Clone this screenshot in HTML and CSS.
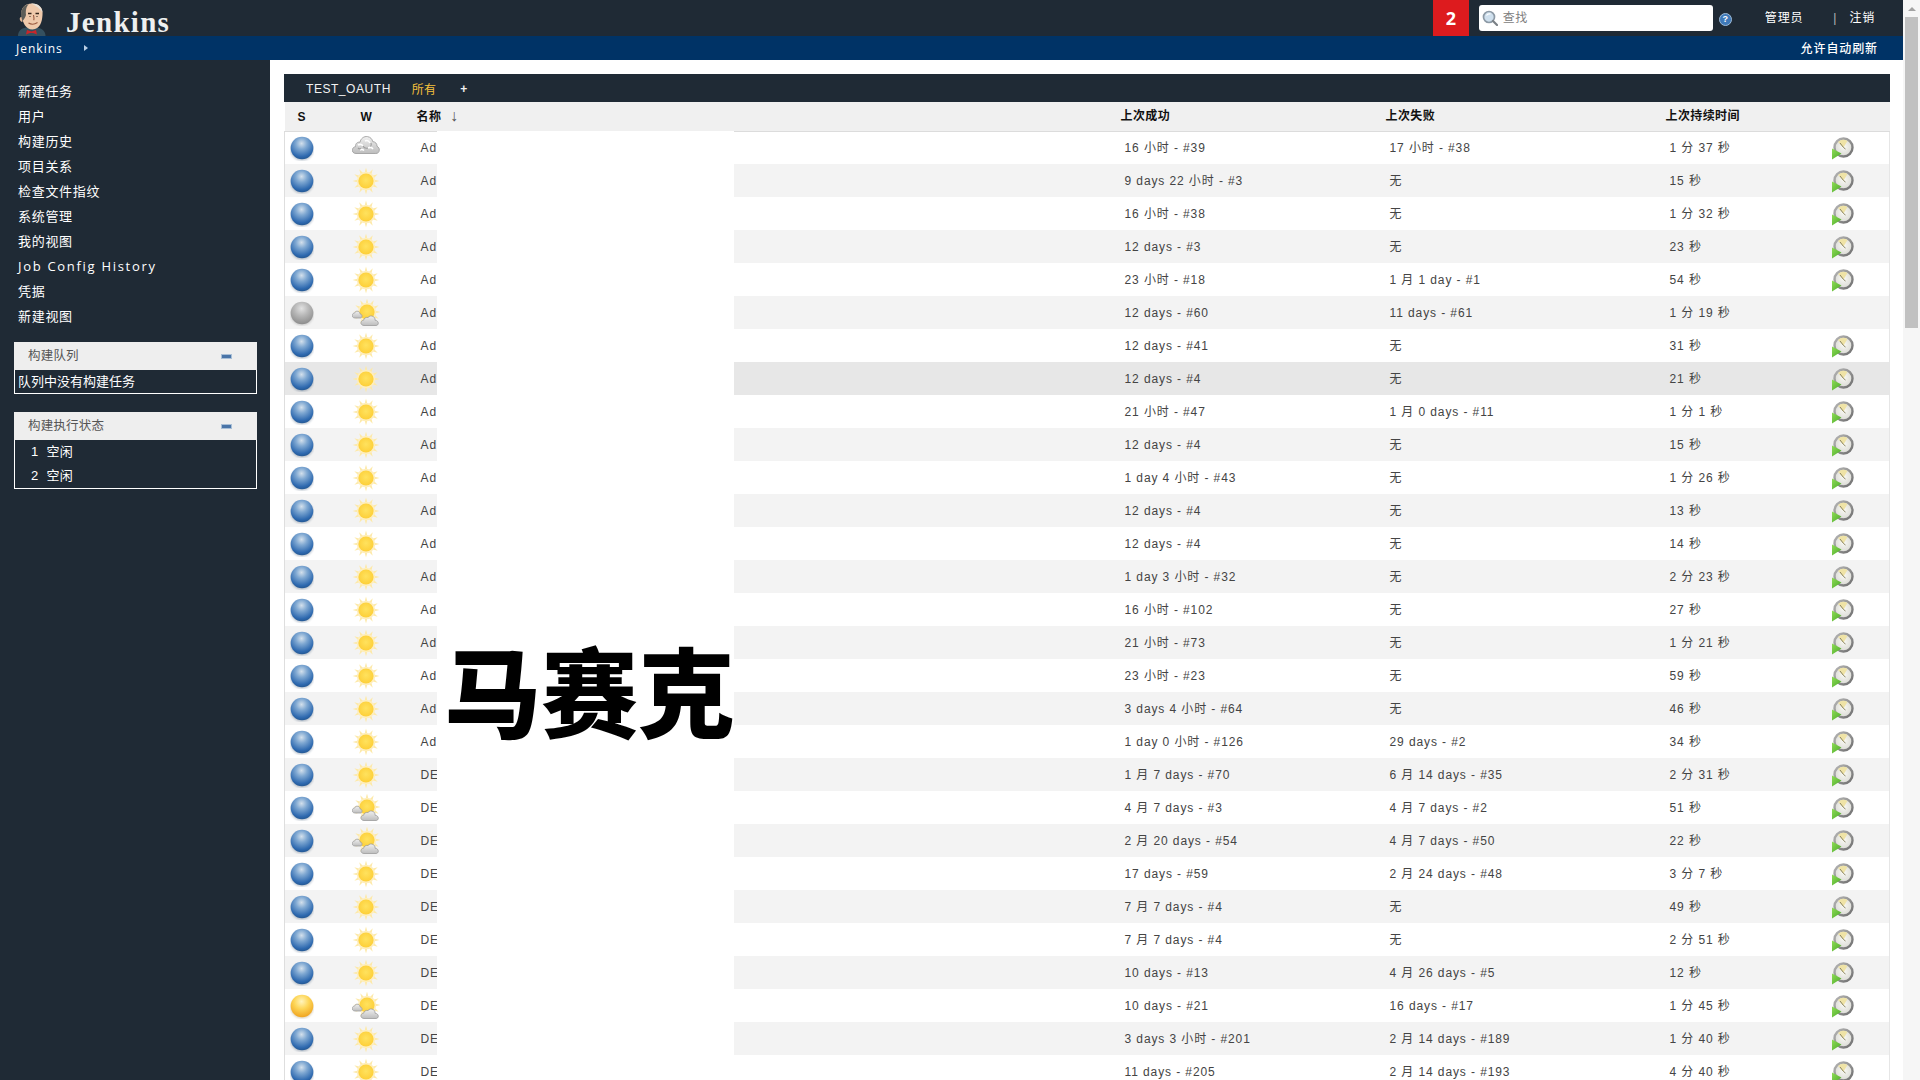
FILE: index.html
```html
<!DOCTYPE html>
<html lang="zh">
<head>
<meta charset="utf-8">
<title>Jenkins</title>
<link rel="stylesheet" href="styles.css">
</head>
<body>
<svg class="defs" aria-hidden="true">
  <defs>
    <radialGradient id="gBlue" cx="48%" cy="30%" r="72%"><stop offset="0" stop-color="#d3e0ec"/><stop offset=".35" stop-color="#7fa8d2"/><stop offset=".8" stop-color="#2f6ab0"/><stop offset="1" stop-color="#22558f"/></radialGradient>
    <radialGradient id="gGray" cx="48%" cy="30%" r="72%"><stop offset="0" stop-color="#e2e2e2"/><stop offset=".45" stop-color="#b7b7b7"/><stop offset="1" stop-color="#8a8a8a"/></radialGradient>
    <radialGradient id="gYellow" cx="48%" cy="30%" r="72%"><stop offset="0" stop-color="#fff4bd"/><stop offset=".45" stop-color="#fdd658"/><stop offset="1" stop-color="#efa11c"/></radialGradient>
    <radialGradient id="gSun" cx="50%" cy="45%" r="55%"><stop offset="0" stop-color="#ffe25e"/><stop offset="1" stop-color="#fdcf38"/></radialGradient>
    <linearGradient id="gCloud" x1="0" y1="0" x2="0" y2="1"><stop offset="0" stop-color="#f0f0f0"/><stop offset="1" stop-color="#bdbdbd"/></linearGradient>
    <linearGradient id="gGreen" x1="0" y1="0" x2="1" y2="1"><stop offset="0" stop-color="#8fdc55"/><stop offset="1" stop-color="#4aa92a"/></linearGradient>
    <linearGradient id="gRing" x1="0" y1="0" x2="1" y2="1"><stop offset="0" stop-color="#b5b5b5"/><stop offset="1" stop-color="#6f6f6f"/></linearGradient>
    <radialGradient id="gFace" cx="50%" cy="45%" r="55%"><stop offset="0" stop-color="#fafaf4"/><stop offset="1" stop-color="#d9d9d4"/></radialGradient>
    <filter id="soft" x="-20%" y="-20%" width="140%" height="140%"><feGaussianBlur stdDeviation=".45"/></filter>
    <filter id="shade" x="-20%" y="-20%" width="140%" height="140%"><feGaussianBlur stdDeviation=".8"/></filter>
    <g id="rays" fill="#fde9a8">
      <path id="ray" d="M14 .5L16 8H12z"/>
      <use href="#ray" transform="rotate(30 14 14)"/><use href="#ray" transform="rotate(60 14 14)"/><use href="#ray" transform="rotate(90 14 14)"/>
      <use href="#ray" transform="rotate(120 14 14)"/><use href="#ray" transform="rotate(150 14 14)"/><use href="#ray" transform="rotate(180 14 14)"/>
      <use href="#ray" transform="rotate(210 14 14)"/><use href="#ray" transform="rotate(240 14 14)"/><use href="#ray" transform="rotate(270 14 14)"/>
      <use href="#ray" transform="rotate(300 14 14)"/><use href="#ray" transform="rotate(330 14 14)"/>
    </g>
    <symbol id="ball-blue" viewBox="0 0 24 25"><ellipse cx="12" cy="13.500" rx="11.500" ry="11" fill="#1c3a5a" opacity=".3" filter="url(#shade)"/><circle cx="12" cy="12" r="11.300" fill="url(#gBlue)"/></symbol>
    <symbol id="ball-gray" viewBox="0 0 24 25"><ellipse cx="12" cy="13.500" rx="11.500" ry="11" fill="#333" opacity=".2" filter="url(#shade)"/><circle cx="12" cy="12" r="11.300" fill="url(#gGray)"/></symbol>
    <symbol id="ball-yellow" viewBox="0 0 24 25"><ellipse cx="12" cy="13.500" rx="11.500" ry="11" fill="#7a5a10" opacity=".25" filter="url(#shade)"/><circle cx="12" cy="12" r="11.300" fill="url(#gYellow)"/></symbol>
    <symbol id="sun" viewBox="0 0 28 28">
      <use href="#rays" filter="url(#soft)"/>
      <circle cx="14" cy="14" r="9.200" fill="#feeebd" filter="url(#soft)"/><circle cx="14" cy="14" r="7.600" fill="url(#gSun)"/>
    </symbol>
    <symbol id="cloud" viewBox="0 0 28 22">
      <path d="M4 19.500c-3 0-4-2.200-3.500-4.200.4-1.700 1.700-2.500 3-2.600C3.300 9.500 5.500 7.700 8 8.300 8.700 4.500 12 2 15.500 2.600c3 .5 4.800 2.500 5.200 5 2.600.1 4.500 2.200 4.300 4.700 1.600.8 2.500 2.300 2.300 4-.2 2-1.500 3.200-3.500 3.200z" fill="url(#gCloud)" stroke="#a0a0a0" stroke-width=".9"/>
      <path d="M6 11c2-1 4-.5 5 1M13 7c2-1 4 0 5 2M16 14c2-1 4-.5 5 1M8 16c2-1 3-.5 4 .5" fill="none" stroke="#fff" stroke-width="1.500"/>
      <path d="M11 12c1 2 3 2.500 5 2M19 9c.5 1.500.3 2.600-.5 3.500M6 14c1 1 2 1 3 .5" fill="none" stroke="#9d9d9d" stroke-width="1.100"/>
    </symbol>
    <symbol id="partly" viewBox="0 0 28 28">
      <g transform="translate(1 -1)"><use href="#rays" filter="url(#soft)"/><circle cx="14" cy="14" r="9.200" fill="#feeebd" filter="url(#soft)"/><circle cx="14" cy="14" r="7.600" fill="url(#gSun)"/></g>
      <path d="M3 19c-2 0-3-1.400-2.800-2.900.2-1.300 1.200-2 2.300-2 .5-1.500 2-2.300 3.500-1.800 1.300.4 2 1.500 2 2.600 1.500.2 2.200 1.300 2 2.500-.2 1-1 1.600-2 1.600z" fill="url(#gCloud)" stroke="#a0a0a0" stroke-width=".8"/>
      <path d="M12 26.500c-2 0-3.200-1.400-3-3 .2-1.300 1.300-2.200 2.500-2.200.5-2 2.300-3.300 4.500-2.800 1.200-1.600 3.500-2 5.200-1 1.500.9 2 2.300 1.800 3.700 1.900.1 3.300 1.400 3.300 3 0 1.300-1 2.300-2.300 2.300z" fill="url(#gCloud)" stroke="#9c9c9c" stroke-width=".8"/>
    </symbol>
    <symbol id="clock" viewBox="0 0 23 23">
      <circle cx="12.500" cy="10.500" r="9" fill="url(#gFace)" stroke="url(#gRing)" stroke-width="2.400"/>
      <path d="M7 5a7.500 7.500 0 0 1 9.500-1L12.500 10.500z" fill="#efe3a6"/>
      <path d="M9 6l3.500 4.500 2 1.500" fill="none" stroke="#8a8462" stroke-width="1"/>
      <path d="M1 11.500L10.500 16.500L1 22.500z" fill="url(#gGreen)"/>
    </symbol>
    <symbol id="logo" viewBox="0 0 30 33">
      <path d="M1 33c0-5 3-7.500 8-8.500h11c5 1 8.500 3.500 8.500 8.500z" fill="#35505f"/>
      <path d="M10 27l4.500 1.500L19 27l1 4.500-4-1.500h-3L9 31.500z" fill="#c9262a"/>
      <path d="M4.500 12C3.500 5 8 .5 15 .5s11.500 4.500 10.500 11.500c-.4 7-2.500 14-10 14.500C8.500 26.500 5.500 19 4.500 12z" fill="#efc9ab"/>
      <path d="M5.500 18C2 10 5 2 12 1 9 3.500 8.500 8 9 12c-.5 2.500-2.500 5-3.500 6z" fill="#5d5d58"/>
      <path d="M14 .5c5.500-.5 11 2.500 11.500 9C23 5.500 19 2.500 14 .5z" fill="#e6e0d7"/>
      <path d="M11 10.500h3.500M18.500 10.500h3.500M13 13v.8M20 13v.8" stroke="#33241b" stroke-width="1.300" fill="none"/>
      <path d="M16.500 12c.3 2.500 1 4 .2 5.300M11.500 20c3 1.800 6 1.600 9-.5" stroke="#9a5a40" stroke-width="1.100" fill="none"/>
      <path d="M4.500 14c-2.500-.5-2.500 4.500 1 5z" fill="#e2b697"/>
    </symbol>
    <symbol id="search" viewBox="0 0 16 16">
      <circle cx="7" cy="7" r="5.500" fill="#cfe0ee" stroke="#8d9aa6" stroke-width="1.700"/>
      <path d="M4.500 5.500a3.500 3.500 0 0 1 4-1.500" stroke="#fff" stroke-width="1.200" fill="none"/>
      <path d="M11 11l4 4" stroke="#7a8086" stroke-width="2.200" stroke-linecap="round"/>
    </symbol>
  </defs>
</svg>

<div class="app">
  <div class="page">
    <header class="topbar">
      <div class="brand">
        <svg class="logo"><use href="#logo"/></svg>
        <span class="wordmark">Jenkins</span>
      </div>
      <div class="top-right">
        <span class="badge">2</span>
        <div class="searchbox">
          <svg class="search-icon"><use href="#search"/></svg>
          <span class="search-text">查找</span>
        </div>
        <span class="help">?</span>
        <span class="user">管理员</span>
        <span class="sep">|</span>
        <span class="logout">注销</span>
      </div>
    </header>
    <nav class="crumbs">
      <span class="crumb">Jenkins</span>
      <span class="crumb-arrow"></span>
      <span class="refresh">允许自动刷新</span>
    </nav>
    <div class="main">
      <aside class="side">
        <ul class="tasks">
          <li>新建任务</li><li>用户</li><li>构建历史</li><li>项目关系</li><li>检查文件指纹</li><li>系统管理</li><li>我的视图</li><li class="latin">Job Config History</li><li>凭据</li><li>新建视图</li>
        </ul>
        <section class="panel">
          <div class="panel-head">构建队列<span class="minus"></span></div>
          <div class="panel-body queue">队列中没有构建任务</div>
        </section>
        <section class="panel">
          <div class="panel-head">构建执行状态<span class="minus"></span></div>
          <div class="panel-body">
            <div class="exec"><span>1</span><span>空闲</span></div>
            <div class="exec"><span>2</span><span>空闲</span></div>
          </div>
        </section>
      </aside>
      <main class="content">
        <div class="tabs">
          <span class="tab">TEST_OAUTH</span>
          <span class="tab active">所有</span>
          <span class="tab plus">+</span>
        </div>
        <div class="table-wrap">
          <table class="jobs">
            <colgroup><col class="c-s"><col class="c-w"><col class="c-n"><col class="c-ok"><col class="c-fail"><col class="c-dur"><col class="c-run"></colgroup>
            <thead>
              <tr><th class="center-s">S</th><th class="center-w">W</th><th>名称 <span class="sort">↓</span></th><th>上次成功</th><th>上次失败</th><th>上次持续时间</th><th></th></tr>
            </thead>
            <tbody>
              <tr><td><svg class="ball"><use href="#ball-blue"/></svg></td><td><svg class="cloud"><use href="#cloud"/></svg></td><td>Ad</td><td>16 小时 - #39</td><td>17 小时 - #38</td><td>1 分 37 秒</td><td><svg class="clock"><use href="#clock"/></svg></td></tr>
              <tr><td><svg class="ball"><use href="#ball-blue"/></svg></td><td><svg class="sun"><use href="#sun"/></svg></td><td>Ad</td><td>9 days 22 小时 - #3</td><td>无</td><td>15 秒</td><td><svg class="clock"><use href="#clock"/></svg></td></tr>
              <tr><td><svg class="ball"><use href="#ball-blue"/></svg></td><td><svg class="sun"><use href="#sun"/></svg></td><td>Ad</td><td>16 小时 - #38</td><td>无</td><td>1 分 32 秒</td><td><svg class="clock"><use href="#clock"/></svg></td></tr>
              <tr><td><svg class="ball"><use href="#ball-blue"/></svg></td><td><svg class="sun"><use href="#sun"/></svg></td><td>Ad</td><td>12 days - #3</td><td>无</td><td>23 秒</td><td><svg class="clock"><use href="#clock"/></svg></td></tr>
              <tr><td><svg class="ball"><use href="#ball-blue"/></svg></td><td><svg class="sun"><use href="#sun"/></svg></td><td>Ad</td><td>23 小时 - #18</td><td>1 月 1 day - #1</td><td>54 秒</td><td><svg class="clock"><use href="#clock"/></svg></td></tr>
              <tr><td><svg class="ball"><use href="#ball-gray"/></svg></td><td><svg class="partly"><use href="#partly"/></svg></td><td>Ad</td><td>12 days - #60</td><td>11 days - #61</td><td>1 分 19 秒</td><td></td></tr>
              <tr><td><svg class="ball"><use href="#ball-blue"/></svg></td><td><svg class="sun"><use href="#sun"/></svg></td><td>Ad</td><td>12 days - #41</td><td>无</td><td>31 秒</td><td><svg class="clock"><use href="#clock"/></svg></td></tr>
              <tr class="hover"><td><svg class="ball"><use href="#ball-blue"/></svg></td><td><svg class="sun"><use href="#sun"/></svg></td><td>Ad</td><td>12 days - #4</td><td>无</td><td>21 秒</td><td><svg class="clock"><use href="#clock"/></svg></td></tr>
              <tr><td><svg class="ball"><use href="#ball-blue"/></svg></td><td><svg class="sun"><use href="#sun"/></svg></td><td>Ad</td><td>21 小时 - #47</td><td>1 月 0 days - #11</td><td>1 分 1 秒</td><td><svg class="clock"><use href="#clock"/></svg></td></tr>
              <tr><td><svg class="ball"><use href="#ball-blue"/></svg></td><td><svg class="sun"><use href="#sun"/></svg></td><td>Ad</td><td>12 days - #4</td><td>无</td><td>15 秒</td><td><svg class="clock"><use href="#clock"/></svg></td></tr>
              <tr><td><svg class="ball"><use href="#ball-blue"/></svg></td><td><svg class="sun"><use href="#sun"/></svg></td><td>Ad</td><td>1 day 4 小时 - #43</td><td>无</td><td>1 分 26 秒</td><td><svg class="clock"><use href="#clock"/></svg></td></tr>
              <tr><td><svg class="ball"><use href="#ball-blue"/></svg></td><td><svg class="sun"><use href="#sun"/></svg></td><td>Ad</td><td>12 days - #4</td><td>无</td><td>13 秒</td><td><svg class="clock"><use href="#clock"/></svg></td></tr>
              <tr><td><svg class="ball"><use href="#ball-blue"/></svg></td><td><svg class="sun"><use href="#sun"/></svg></td><td>Ad</td><td>12 days - #4</td><td>无</td><td>14 秒</td><td><svg class="clock"><use href="#clock"/></svg></td></tr>
              <tr><td><svg class="ball"><use href="#ball-blue"/></svg></td><td><svg class="sun"><use href="#sun"/></svg></td><td>Ad</td><td>1 day 3 小时 - #32</td><td>无</td><td>2 分 23 秒</td><td><svg class="clock"><use href="#clock"/></svg></td></tr>
              <tr><td><svg class="ball"><use href="#ball-blue"/></svg></td><td><svg class="sun"><use href="#sun"/></svg></td><td>Ad</td><td>16 小时 - #102</td><td>无</td><td>27 秒</td><td><svg class="clock"><use href="#clock"/></svg></td></tr>
              <tr><td><svg class="ball"><use href="#ball-blue"/></svg></td><td><svg class="sun"><use href="#sun"/></svg></td><td>Ad</td><td>21 小时 - #73</td><td>无</td><td>1 分 21 秒</td><td><svg class="clock"><use href="#clock"/></svg></td></tr>
              <tr><td><svg class="ball"><use href="#ball-blue"/></svg></td><td><svg class="sun"><use href="#sun"/></svg></td><td>Ad</td><td>23 小时 - #23</td><td>无</td><td>59 秒</td><td><svg class="clock"><use href="#clock"/></svg></td></tr>
              <tr><td><svg class="ball"><use href="#ball-blue"/></svg></td><td><svg class="sun"><use href="#sun"/></svg></td><td>Ad</td><td>3 days 4 小时 - #64</td><td>无</td><td>46 秒</td><td><svg class="clock"><use href="#clock"/></svg></td></tr>
              <tr><td><svg class="ball"><use href="#ball-blue"/></svg></td><td><svg class="sun"><use href="#sun"/></svg></td><td>Ad</td><td>1 day 0 小时 - #126</td><td>29 days - #2</td><td>34 秒</td><td><svg class="clock"><use href="#clock"/></svg></td></tr>
              <tr><td><svg class="ball"><use href="#ball-blue"/></svg></td><td><svg class="sun"><use href="#sun"/></svg></td><td>DE</td><td>1 月 7 days - #70</td><td>6 月 14 days - #35</td><td>2 分 31 秒</td><td><svg class="clock"><use href="#clock"/></svg></td></tr>
              <tr><td><svg class="ball"><use href="#ball-blue"/></svg></td><td><svg class="partly"><use href="#partly"/></svg></td><td>DE</td><td>4 月 7 days - #3</td><td>4 月 7 days - #2</td><td>51 秒</td><td><svg class="clock"><use href="#clock"/></svg></td></tr>
              <tr><td><svg class="ball"><use href="#ball-blue"/></svg></td><td><svg class="partly"><use href="#partly"/></svg></td><td>DE</td><td>2 月 20 days - #54</td><td>4 月 7 days - #50</td><td>22 秒</td><td><svg class="clock"><use href="#clock"/></svg></td></tr>
              <tr><td><svg class="ball"><use href="#ball-blue"/></svg></td><td><svg class="sun"><use href="#sun"/></svg></td><td>DE</td><td>17 days - #59</td><td>2 月 24 days - #48</td><td>3 分 7 秒</td><td><svg class="clock"><use href="#clock"/></svg></td></tr>
              <tr><td><svg class="ball"><use href="#ball-blue"/></svg></td><td><svg class="sun"><use href="#sun"/></svg></td><td>DE</td><td>7 月 7 days - #4</td><td>无</td><td>49 秒</td><td><svg class="clock"><use href="#clock"/></svg></td></tr>
              <tr><td><svg class="ball"><use href="#ball-blue"/></svg></td><td><svg class="sun"><use href="#sun"/></svg></td><td>DE</td><td>7 月 7 days - #4</td><td>无</td><td>2 分 51 秒</td><td><svg class="clock"><use href="#clock"/></svg></td></tr>
              <tr><td><svg class="ball"><use href="#ball-blue"/></svg></td><td><svg class="sun"><use href="#sun"/></svg></td><td>DE</td><td>10 days - #13</td><td>4 月 26 days - #5</td><td>12 秒</td><td><svg class="clock"><use href="#clock"/></svg></td></tr>
              <tr><td><svg class="ball"><use href="#ball-yellow"/></svg></td><td><svg class="partly"><use href="#partly"/></svg></td><td>DE</td><td>10 days - #21</td><td>16 days - #17</td><td>1 分 45 秒</td><td><svg class="clock"><use href="#clock"/></svg></td></tr>
              <tr><td><svg class="ball"><use href="#ball-blue"/></svg></td><td><svg class="sun"><use href="#sun"/></svg></td><td>DE</td><td>3 days 3 小时 - #201</td><td>2 月 14 days - #189</td><td>1 分 40 秒</td><td><svg class="clock"><use href="#clock"/></svg></td></tr>
              <tr><td><svg class="ball"><use href="#ball-blue"/></svg></td><td><svg class="sun"><use href="#sun"/></svg></td><td>DE</td><td>11 days - #205</td><td>2 月 14 days - #193</td><td>4 分 40 秒</td><td><svg class="clock"><use href="#clock"/></svg></td></tr>
            </tbody>
          </table>
          <div class="mosaic"><span class="mosaic-text">马赛克</span></div>
        </div>
      </main>
    </div>
  </div>
  <div class="scrollbar">
    <span class="scroll-up"></span>
    <span class="scroll-thumb"></span>
  </div>
</div>
</body>
</html>
```

FILE: styles.css
```css
* { box-sizing: border-box; }
html, body { margin: 0; height: 100%; overflow: hidden; background: #fff; }
body {
  font-family: "Liberation Sans", "Noto Sans CJK SC", sans-serif;
  font-size: 12px;
  color: #333;
}
.defs { position: absolute; width: 0; height: 0; }

.app { display: flex; height: 1080px; overflow: hidden; }
.page { flex: 1; min-width: 0; display: flex; flex-direction: column; }

/* scrollbar */
.scrollbar { width: 17px; background: #f6f6f6; display: flex; flex-direction: column; align-items: center; }
.scroll-up { height: 17px; width: 17px; display: flex; justify-content: center; align-items: center; }
.scroll-up::before { content: ""; border: 4px solid transparent; border-top: 0; border-bottom: 4px solid #a3a3a3; }
.scroll-thumb { width: 13px; height: 311px; background: #c1c1c1; }

/* top */
.topbar { height: 36px; background: #1f2a35; display: flex; justify-content: space-between; flex: none; }
.brand { display: flex; align-items: flex-start; padding-left: 17px; }
.logo { width: 30px; height: 33px; margin-top: 3px; }
.wordmark {
  font-family: "Liberation Serif", serif;
  font-weight: 700;
  font-size: 29px;
  letter-spacing: 1.300px;
  color: #eef0f0;
  line-height: 32px;
  margin: 6px 0 0 19px;
}
.top-right { display: flex; align-items: flex-start; color: #fff; font-size: 12px; }
.badge {
  width: 36px; height: 36px; background: #dd1b1e; color: #fff;
  font: 700 18px/36px "Noto Sans", sans-serif; text-align: center;
}
.searchbox {
  width: 234px; height: 26px; margin: 5px 0 0 10px; background: #fff; border-radius: 3px;
  display: flex; align-items: center; padding: 0 0 1px 3px; color: #808080;
}
.search-icon { width: 16px; height: 16px; }
.search-text { margin: -2px 0 0 5px; letter-spacing: .5px; }
.help {
  width: 13px; height: 13px; margin: 13px 0 0 6px; border-radius: 50%;
  background: #3f79b8; border: 1px solid #9dbbd8; color: #fff;
  font: 700 9px/11px "Liberation Sans", sans-serif; text-align: center;
}
.user { margin: 10px 0 0 33px; letter-spacing: .8px; line-height: 17px; }
.sep { margin: 10px 0 0 30px; line-height: 17px; color: #bbb; }
.logout { margin: 10px 28px 0 13px; letter-spacing: .8px; line-height: 17px; }

.crumbs {
  height: 24px; background: #003366; color: #fff; flex: none;
  display: flex; align-items: center; padding: 0 25px 0 16px; font-size: 12px; letter-spacing: 1px;
}
.crumb { font-family: "Open Sans", sans-serif; font-size: 12px; }
.crumb-arrow { margin-left: 21px; border: 3.500px solid transparent; border-left: 4px solid #b9cfe6; border-right: 0; }
.refresh { margin: -2px 0 0 auto; letter-spacing: .9px; font-weight: 500; }

/* layout */
.main { flex: 1; min-height: 0; display: flex; }
.side { width: 270px; flex: none; background: #1f2a35; color: #fff; padding: 19px 13px 0 14px; }
.tasks { list-style: none; margin: 0 0 13px; padding: 0 0 0 4px; }
.tasks li { height: 25px; line-height: 25px; font-size: 13px; letter-spacing: .7px; white-space: nowrap; }
.tasks li.latin { font-family: "Open Sans", sans-serif; letter-spacing: 1.700px; }
.panel { margin-bottom: 18px; }
.panel-head {
  height: 28px; line-height: 29px; background: #eeeeee; color: #555; font-size: 12.500px; letter-spacing: .2px;
  padding-left: 14px; display: flex; position: relative;
}
.minus {
  position: absolute; left: 207px; top: 12px; width: 11px; height: 5px;
  background: #4a75a8; border: 1px solid #a9bfd6;
}
.panel-body { border: 1px solid #fff; border-top: 0; font-size: 13px; letter-spacing: 0; }
.queue { height: 24px; line-height: 23px; padding-left: 3px; }
.exec { height: 24px; line-height: 24px; display: flex; gap: 8px; padding-left: 16px; letter-spacing: .2px; }

.content { flex: 1; min-width: 0; padding: 14px 13px 0 14px; overflow: hidden; }
.tabs {
  height: 28px; background: #1f2a35; color: #f2f2f2; display: flex; align-items: center;
  padding: 1px 0 0 22px; font-size: 12px; letter-spacing: .55px;
}
.tab { margin-right: 21px; white-space: nowrap; }
.tab.active { color: #f5c13d; letter-spacing: .2px; margin-right: 24px; }
.tab.plus { font-weight: 700; }

/* table */
.table-wrap { position: relative; }
.jobs { width: 1605px; border-collapse: collapse; table-layout: fixed; }
.c-s { width: 57px; } .c-w { width: 70px; } .c-n { width: 704px; }
.c-ok { width: 265px; } .c-fail { width: 280px; } .c-dur { width: 165px; } .c-run { width: 64px; }
.jobs th {
  height: 29px; background: #f0f0f0; color: #111; font-size: 12px; font-weight: 700; text-align: left;
  padding: 0 0 0 5px; letter-spacing: .4px; border-bottom: 1px solid #dcdcdc; line-height: 16px;
}
.jobs th.center-s { padding: 2px 0 0 13px; }
.jobs th.center-w { padding: 2px 0 0 19px; }
.sort { font-weight: 400; font-size: 16px; color: #555; margin-left: 5px; }
.jobs td {
  height: 33px; padding: 0 0 0 9px; font-size: 12px; line-height: 16px; letter-spacing: .9px; white-space: nowrap;
  color: #444; vertical-align: middle;
}
.jobs td:nth-child(1) { padding: 2px 0 0 5px; border-left: 1px solid #dedede; }
.jobs td:nth-child(2) { padding: 0 0 0 10px; }
.jobs td:last-child { padding: 2px 0 0 5px; border-right: 1px solid #e6e6e6; }
.jobs tbody tr:nth-child(even) td { background: #f3f3f3; }
.jobs tbody tr.hover td { background: #e7e7e7; }
.ball { width: 24px; height: 25px; display: block; }
.sun { width: 28px; height: 28px; display: block; }
.partly { width: 28px; height: 28px; display: block; }
.cloud { width: 28px; height: 22px; display: block; margin-top: -5px; }
.clock { width: 23px; height: 23px; display: block; }

.mosaic {
  position: absolute; left: 153px; top: 29px; width: 297px; height: 1000px; background: #fff;
}
.mosaic-text {
  position: absolute; left: 7px; top: 492px;
  font-family: "Noto Sans CJK SC", sans-serif; font-weight: 900; font-size: 97px; line-height: 130px;
  color: #000; white-space: nowrap;
}
```
